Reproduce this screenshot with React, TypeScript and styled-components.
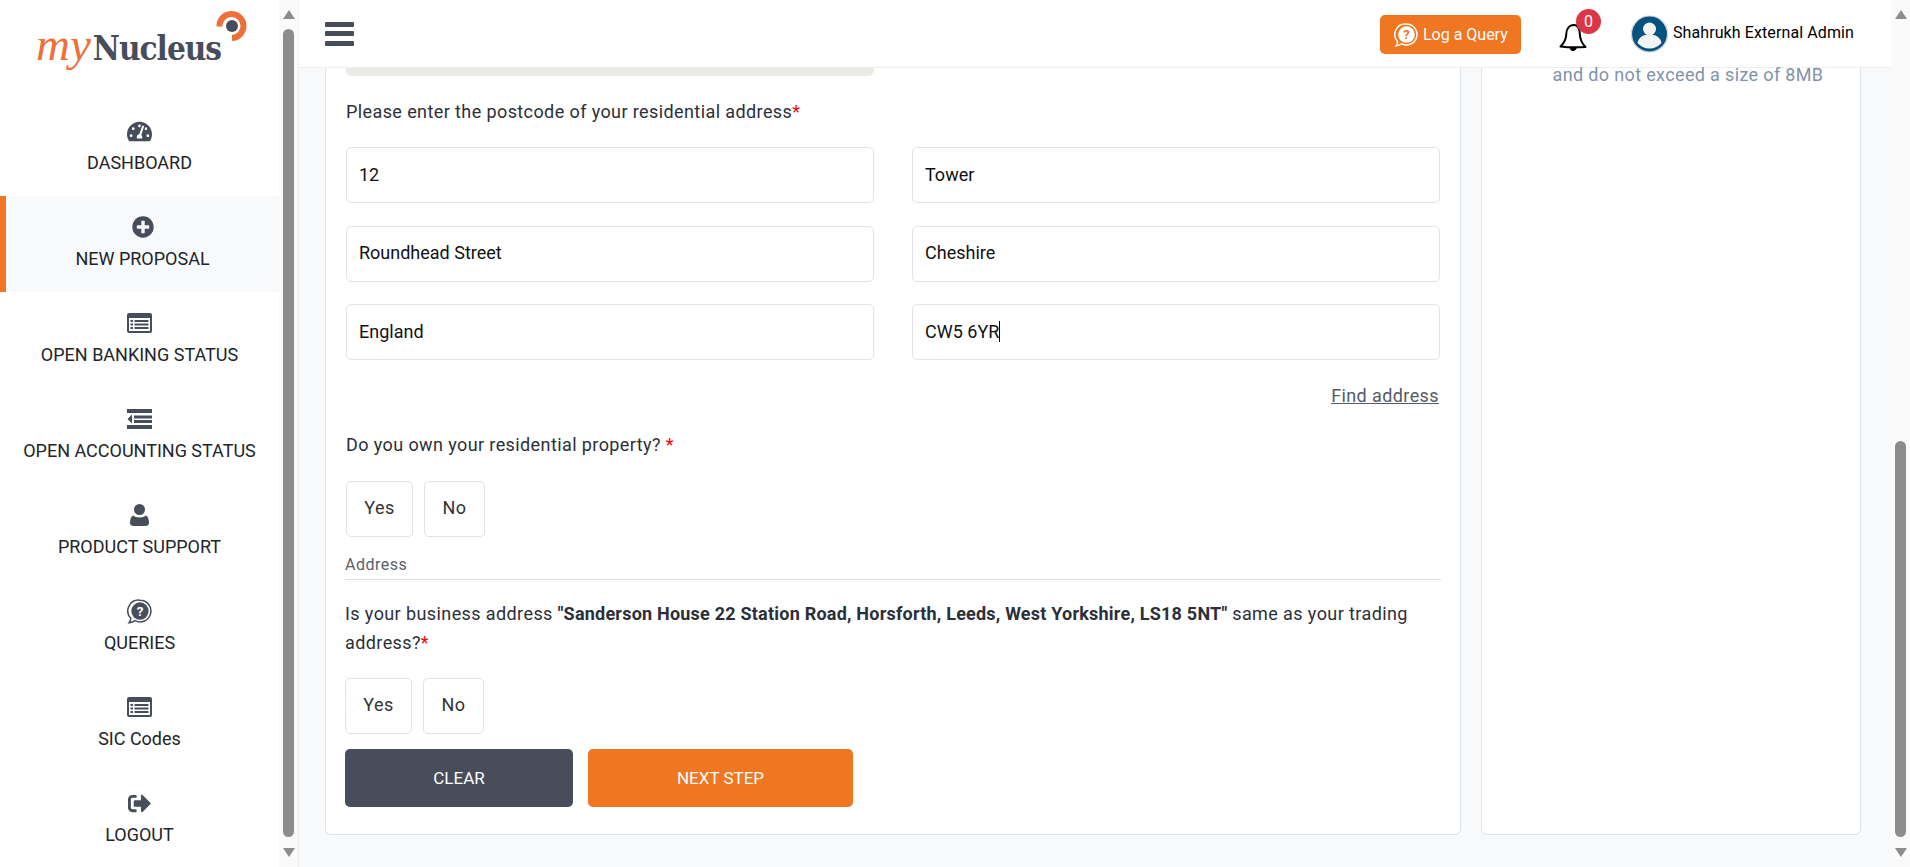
import React, { FC, ReactNode } from 'react'
import styled, { createGlobalStyle } from 'styled-components'
import { FaTachometerAlt, FaPlusCircle, FaSignOutAlt } from 'react-icons/fa'

const ORANGE = '#f07622'
const DARK = '#474d5b'
const FONT = 'Roboto, "Liberation Sans", sans-serif'

const Global = createGlobalStyle`
  html, body {
    margin: 0;
    padding: 0;
    height: 100%;
    overflow: hidden;
    background: #f8f9fb;
    font-family: ${FONT};
  }
  * { box-sizing: border-box; }
`

const Page = styled.div`
  display: flex;
  width: 100vw;
  height: 100vh;
  overflow: hidden;
`

const Sidebar = styled.aside`
  width: 279px;
  flex: none;
  background: #fff;
  display: flex;
  flex-direction: column;
`

const LogoArea = styled.div`
  height: 100px;
  padding: 24px 0 0 36px;
  flex: none;
`

const Wordmark = styled.div`
  position: relative;
  display: inline-flex;
  align-items: baseline;
  height: 40px;
  line-height: 40px;
  white-space: nowrap;
`

const LogoMy = styled.span`
  font-family: "Liberation Serif", serif;
  font-style: italic;
  font-size: 47px;
  color: #ee6f38;
  margin-right: 2px;
`

const LogoName = styled.span`
  font-family: "DejaVu Serif Condensed", "DejaVu Serif", serif;
  font-weight: 700;
  font-size: 33px;
  letter-spacing: -1px;
  color: ${DARK};
`

const LogoRing = styled.svg`
  position: absolute;
  left: 179px;
  top: -13px;
`

const NavItem = styled.div<{ $active?: boolean }>`
  height: 96px;
  flex: none;
  display: flex;
  flex-direction: column;
  align-items: center;
  padding-top: 18px;
  color: #212529;
  font-size: 18px;
  line-height: 24px;
  white-space: nowrap;
  background: ${p => (p.$active ? '#f8f9fb' : 'transparent')};
  border-left: ${p => (p.$active ? `6px solid ${ORANGE}` : 'none')};
`

const NavIcon = styled.div`
  height: 26px;
  margin-bottom: 7px;
  display: flex;
  align-items: center;
  justify-content: center;
  color: ${DARK};
`

const Rail = styled.div`
  width: 19px;
  flex: none;
  height: 100%;
  background: #fafafa;
  display: flex;
  flex-direction: column;
  align-items: center;
  padding: 10px 0;
`

const ArrowUp = styled.div`
  width: 0;
  height: 0;
  border-left: 6.5px solid transparent;
  border-right: 6.5px solid transparent;
  border-bottom: 9px solid #8c8c8c;
  flex: none;
`

const ArrowDown = styled(ArrowUp)`
  border-bottom: none;
  border-top: 9px solid #8c8c8c;
  margin-top: auto;
`

const Thumb = styled.div<{ $top: number; $height: number }>`
  width: 11px;
  flex: none;
  margin-top: ${p => p.$top}px;
  height: ${p => p.$height}px;
  background: #8c8c8c;
  border-radius: 6px;
`

const Main = styled.main`
  flex: 1;
  min-width: 0;
  display: flex;
  flex-direction: column;
  border-left: 1px solid #eff0f2;
`

const Topbar = styled.header`
  height: 68px;
  flex: none;
  background: #fff;
  border-bottom: 1px solid #eeeeee;
  display: flex;
  align-items: center;
  padding: 0 37px 0 26px;
`

const Burger = styled.div`
  width: 29px;
  height: 24px;
  display: flex;
  flex-direction: column;
  justify-content: space-between;
  margin-right: auto;
  span {
    display: block;
    height: 5px;
    background: ${DARK};
    border-radius: 1px;
  }
`

const QueryButton = styled.div`
  width: 141px;
  height: 39px;
  margin-top: 2px;
  background: ${ORANGE};
  border-radius: 5px;
  color: #fff;
  display: flex;
  align-items: center;
  padding-left: 14px;
  gap: 5px;
  font-size: 16px;
`

const BellWrap = styled.div`
  position: relative;
  width: 28px;
  height: 30px;
  margin: 6px 0 0 38px;
  color: #000;
`

const Badge = styled.div`
  position: absolute;
  top: -13px;
  left: 17px;
  width: 25px;
  height: 25px;
  border-radius: 50%;
  background: #dc3545;
  color: #fff;
  font-size: 16px;
  display: flex;
  align-items: center;
  justify-content: center;
`

const Avatar = styled.svg`
  margin: 1px 5px 0 44px;
  flex: none;
`

const UserName = styled.div`
  font-size: 16px;
  letter-spacing: 0.1px;
  color: #000;
  white-space: nowrap;
  margin-top: -3px;
`

const Content = styled.div`
  flex: 1;
  min-height: 0;
  display: flex;
  gap: 20px;
  padding: 0 30px 32px 26px;
`

const FormCard = styled.section`
  width: 1136px;
  flex: none;
  background: #fff;
  border: 1px solid #dfe2e6;
  border-top: none;
  border-radius: 0 0 6px 6px;
  padding: 0 19px 0 20px;
`

const SideCard = styled.section`
  flex: 1;
  background: #fff;
  border: 1px solid #dfe2e6;
  border-top: none;
  border-radius: 0 0 6px 6px;
  padding-left: 34px;
`

const SideNote = styled.div`
  text-align: center;
  color: #8093ab;
  font-size: 18px;
  line-height: 14px;
  letter-spacing: 0.35px;
  white-space: nowrap;
`

const CutBox = styled.div`
  height: 8px;
  background: #ebebe4;
  border-radius: 0 0 6px 6px;
  width: 528px;
`

const Question = styled.div<{ $top: number }>`
  margin-top: ${p => p.$top}px;
  font-size: 18px;
  line-height: 24px;
  letter-spacing: 0.4px;
  color: #2b2f3a;
`

const Req = styled.span`
  color: #f00;
`

const FieldGrid = styled.div`
  display: grid;
  grid-template-columns: 528px 528px;
  column-gap: 38px;
  row-gap: 22.5px;
  margin-top: 23px;
`

const Field = styled.div`
  height: 56px;
  border: 1px solid #e2e3e5;
  border-radius: 5px;
  display: flex;
  align-items: center;
  padding: 0 0 2px 12px;
  font-size: 18px;
  color: #111;
`

const Caret = styled.span`
  display: inline-block;
  width: 1px;
  height: 21px;
  background: #000;
`

const FindRow = styled.div`
  margin-top: 23.5px;
  text-align: right;
  padding-right: 2px;
  font-size: 18px;
  line-height: 24px;
  letter-spacing: 0.4px;
  color: #555b66;
  text-decoration: underline;
`

const Choices = styled.div<{ $top: number; $shift?: number }>`
  display: flex;
  gap: 11px;
  margin-top: ${p => p.$top}px;
  margin-left: ${p => p.$shift || 0}px;
`

const Choice = styled.div<{ $w: number }>`
  width: ${p => p.$w}px;
  height: 56px;
  border: 1px solid #e2e3e5;
  border-radius: 5px;
  display: flex;
  align-items: center;
  justify-content: center;
  padding-bottom: 3px;
  font-size: 18px;
  letter-spacing: 0.4px;
  color: #333;
`

const SectionTitle = styled.div`
  margin: 18px 0 0 -1px;
  height: 25px;
  border-bottom: 1px solid #dfe0e2;
  font-size: 16px;
  line-height: 20px;
  letter-spacing: 0.5px;
  color: #5b606b;
`

const Paragraph = styled.div`
  margin: 19px 0 0 -1px;
  font-size: 18px;
  line-height: 29px;
  letter-spacing: 0.4px;
  color: #2b2f3a;
  b {
    font-weight: 700;
    letter-spacing: 0.22px;
  }
`

const Actions = styled.div`
  display: flex;
  gap: 15px;
  margin: 15px 0 0 -1px;
`

const ActionButton = styled.div<{ $w: number; $bg: string }>`
  width: ${p => p.$w}px;
  height: 58px;
  background: ${p => p.$bg};
  border-radius: 5px;
  color: #fff;
  display: flex;
  align-items: center;
  justify-content: center;
  font-size: 17px;
  font-weight: 400;
`

const ListAlt: FC = () => (
  <svg width="25" height="20" viewBox="0 0 25 20">
    <rect x="0" y="0" width="25" height="20" rx="2" fill={DARK} />
    <rect x="2" y="5" width="21" height="13" fill="#fff" />
    <rect x="3.500" y="7" width="2.500" height="2" fill={DARK} />
    <rect x="3.500" y="10.500" width="2.500" height="2" fill={DARK} />
    <rect x="3.500" y="14" width="2.500" height="2" fill={DARK} />
    <rect x="7.500" y="7" width="14" height="2" fill={DARK} />
    <rect x="7.500" y="10.500" width="14" height="2" fill={DARK} />
    <rect x="7.500" y="14" width="14" height="2" fill={DARK} />
  </svg>
)

const OutdentIcon: FC = () => (
  <svg width="25" height="20" viewBox="0 0 25 20" fill={DARK}>
    <rect x="0" y="0" width="25" height="4" />
    <rect x="7" y="6.500" width="18" height="3" />
    <rect x="7" y="11" width="18" height="3" />
    <rect x="0" y="16" width="25" height="4" />
    <path d="M5 5.500v9L.5 10z" />
  </svg>
)

const UserIcon: FC = () => (
  <svg width="19" height="22" viewBox="0 0 19 22" fill={DARK}>
    <circle cx="9.500" cy="5.500" r="5.500" />
    <path d="M3 11.500c1.500 1.300 3.800 2 6.500 2s5-.7 6.500-2c2 1 3 4 3 7.500 0 2-1.500 3-3.500 3h-12C1.500 22 0 21 0 19c0-3.500 1-6.500 3-7.500z" />
  </svg>
)

const QueryIcon: FC<{ size: number; color: string; mark: string }> = ({ size, color, mark }) => (
  <svg width={size} height={size} viewBox="0 0 26 26">
    <path
      d="M13.500 1.200a11.300 11.300 0 1 1-5.200 21.300c-1.600 1.200-3.600 1.900-6 2.200 1.100-1.400 1.600-3 1.600-4.600A11.300 11.300 0 0 1 13.500 1.200z"
      fill="none"
      stroke={color}
      strokeWidth="1.600"
    />
    <circle cx="13.500" cy="12.500" r="9" fill={color} />
    <text x="13.500" y="17.600" textAnchor="middle" fontSize="14" fontWeight="700" fontFamily={FONT} fill={mark}>?</text>
  </svg>
)

const BellIcon: FC = () => (
  <svg width="28" height="30" viewBox="0 0 28 30" fill="none" stroke="currentColor" strokeWidth="2">
    <path d="M15 3C10 3 7.500 7 7.300 12c-.2 5-2 9-5.800 12.500 8 1 17 1 25 .5C23 21.500 21 17 20.800 12 20.600 7 19 3 15 3z" strokeLinejoin="round" />
    <path d="M11 25.500c0 4 6 4 6.500 0z" fill="currentColor" strokeWidth="1" />
  </svg>
)

const LogoMark: FC = () => (
  <LogoRing width="32" height="34" viewBox="0 0 32 34">
    <path d="M4.500 15.500A12 12 0 1 1 17 27" fill="none" stroke="#ee6f38" strokeWidth="6" />
    <circle cx="17" cy="15" r="6" fill={DARK} />
  </LogoRing>
)

const items: { label: string; icon: ReactNode; active?: boolean }[] = [
  { label: 'DASHBOARD', icon: <FaTachometerAlt size={25} /> },
  { label: 'NEW PROPOSAL', icon: <FaPlusCircle size={22} />, active: true },
  { label: 'OPEN BANKING STATUS', icon: <ListAlt /> },
  { label: 'OPEN ACCOUNTING STATUS', icon: <OutdentIcon /> },
  { label: 'PRODUCT SUPPORT', icon: <UserIcon /> },
  { label: 'QUERIES', icon: <QueryIcon size={25} color={DARK} mark="#fff" /> },
  { label: 'SIC Codes', icon: <ListAlt /> },
  { label: 'LOGOUT', icon: <FaSignOutAlt size={23} /> },
]

const App: FC = () => (
  <Page>
    <Global />
    <Sidebar>
      <LogoArea>
        <Wordmark>
          <LogoMy>my</LogoMy>
          <LogoName>Nucleus</LogoName>
          <LogoMark />
        </Wordmark>
      </LogoArea>
      {items.map(item => (
        <NavItem key={item.label} $active={item.active}>
          <NavIcon>{item.icon}</NavIcon>
          {item.label}
        </NavItem>
      ))}
    </Sidebar>
    <Rail>
      <ArrowUp />
      <Thumb $top={10} $height={808} />
      <ArrowDown />
    </Rail>
    <Main>
      <Topbar>
        <Burger><span /><span /><span /></Burger>
        <QueryButton>
          <QueryIcon size={24} color="#fff" mark={ORANGE} />
          Log a Query
        </QueryButton>
        <BellWrap>
          <BellIcon />
          <Badge>0</Badge>
        </BellWrap>
        <Avatar width="37" height="38" viewBox="0 0 37 38">
          <circle cx="18.500" cy="19" r="18" fill="#04527f" stroke="#cfd3d6" strokeWidth="1.200" />
          <circle cx="18.500" cy="14" r="6.500" fill="#f3f3f3" />
          <path d="M6.500 28c1-6 6-8.500 12-8.500s11 2.500 12 8.500c-3 3.500-7 5.500-12 5.500s-9-2-12-5.500z" fill="#f3f3f3" />
        </Avatar>
        <UserName>Shahrukh External Admin</UserName>
      </Topbar>
      <Content>
        <FormCard>
          <CutBox />
          <Question $top={24}>Please enter the postcode of your residential address<Req>*</Req></Question>
          <FieldGrid>
            <Field>12</Field>
            <Field>Tower</Field>
            <Field>Roundhead Street</Field>
            <Field>Cheshire</Field>
            <Field>England</Field>
            <Field>CW5 6YR<Caret /></Field>
          </FieldGrid>
          <FindRow>Find address</FindRow>
          <Question $top={25}>Do you own your residential property? <Req>*</Req></Question>
          <Choices $top={24}>
            <Choice $w={67}>Yes</Choice>
            <Choice $w={61}>No</Choice>
          </Choices>
          <SectionTitle>Address</SectionTitle>
          <Paragraph>
            Is your business address <b>"Sanderson House 22 Station Road, Horsforth, Leeds, West Yorkshire, LS18 5NT"</b> same as your trading address?<Req>*</Req>
          </Paragraph>
          <Choices $top={21} $shift={-1}>
            <Choice $w={67}>Yes</Choice>
            <Choice $w={61}>No</Choice>
          </Choices>
          <Actions>
            <ActionButton $w={228} $bg={DARK}>CLEAR</ActionButton>
            <ActionButton $w={265} $bg={ORANGE}>NEXT STEP</ActionButton>
          </Actions>
        </FormCard>
        <SideCard>
          <SideNote>and do not exceed a size of 8MB</SideNote>
        </SideCard>
      </Content>
    </Main>
    <Rail>
      <ArrowUp />
      <Thumb $top={422} $height={396} />
      <ArrowDown />
    </Rail>
  </Page>
)

export default App
